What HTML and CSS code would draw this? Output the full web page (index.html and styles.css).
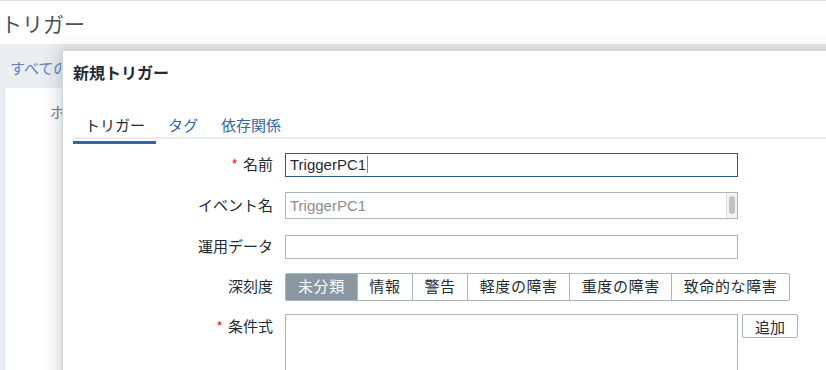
FILE: index.html
```html
<!DOCTYPE html>
<html lang="ja">

<head>
    <meta charset="UTF-8">
    <meta name="viewport" content="width=device-width, initial-scale=1.0">
    <title>トリガー</title>
    <link rel="stylesheet" href="styles.css">
</head>

<body>
    <div class="page-header">
        <h1 class="page-title">トリガー</h1>
    </div>
    <div class="filter-link">すべてのホスト</div>
    <div class="panel">
        <span class="panel-text">ホスト</span>
    </div>

    <div class="modal">
        <div class="modal-head">
            <h4>新規トリガー</h4>
        </div>
        <ul class="tabs">
            <li class="tab active">トリガー</li>
            <li class="tab">タグ</li>
            <li class="tab">依存関係</li>
        </ul>
        <div class="form">
            <div class="row">
                <label class="lbl"><span class="req">*</span>名前</label>
                <div class="field focused">TriggerPC1<span class="caret"></span></div>
            </div>
            <div class="row row-event">
                <label class="lbl">イベント名</label>
                <div class="field readonly">
                    <span class="ph">TriggerPC1</span>
                    <span class="scroll"><span class="thumb"></span></span>
                </div>
            </div>
            <div class="row row-ops">
                <label class="lbl">運用データ</label>
                <div class="field"></div>
            </div>
            <div class="row row-sev">
                <label class="lbl">深刻度</label>
                <div class="segments">
                    <span class="seg selected">未分類</span>
                    <span class="seg">情報</span>
                    <span class="seg">警告</span>
                    <span class="seg">軽度の障害</span>
                    <span class="seg">重度の障害</span>
                    <span class="seg">致命的な障害</span>
                </div>
            </div>
            <div class="row row-top">
                <label class="lbl"><span class="req">*</span>条件式</label>
                <div class="field area"></div>
                <button class="btn">追加</button>
            </div>
        </div>
    </div>
</body>

</html>
```

FILE: styles.css
```css
body {
    margin: 0;
    width: 826px;
    height: 370px;
    overflow: hidden;
    position: relative;
    background: #ebeef0;
    font-family: "Liberation Sans", "Noto Sans CJK JP", sans-serif;
    color: #1f2c33;
}

.page-header {
    height: 43px;
    background: #fff;
    border-top: 1px solid #dcdfe2;
    display: flex;
    align-items: center;
}

.page-title {
    margin: 0;
    padding-left: 1px;
    font-size: 21px;
    font-weight: normal;
    color: #4c5256;
}

/* 被弹窗挡住的部分裁掉 */
.filter-link {
    width: 51px;
    overflow: hidden;
    padding: 15px 0 0 10px;
    height: 20px;
    line-height: 20px;
    font-size: 15px;
    color: #5a84c6;
    white-space: nowrap;
}

.panel {
    margin: 9px 0 0 4px;
    height: 300px;
    background: #fff;
    border-left: 1px solid #dde2e5;
    padding: 15px 0 0 45px;
}

.panel-text {
    display: block;
    width: 12px;
    overflow: hidden;
    white-space: nowrap;
    line-height: 20px;
    font-size: 15px;
    color: #777c80;
}

/* 弹窗 */
.modal {
    position: absolute;
    left: 62px;
    top: 50px;
    width: 820px;
    height: 340px;
    background: #fff;
    border: 1px solid #cfd6db;
    box-shadow: -6px 0 16px rgba(0, 0, 0, 0.12), 0 -3px 6px rgba(0, 0, 0, 0.05);
}

.modal-head {
    padding: 13px 10px 0;
}

.modal-head h4 {
    margin: 0;
    font-size: 16px;
    line-height: 20px;
    font-weight: bold;
    color: #1f2c33;
}

.tabs {
    list-style: none;
    margin: 32px 10px 0;
    padding: 0;
    display: flex;
    border-bottom: 2px solid #ebeef0;
}

.tab {
    position: relative;
    padding: 0 11px 1px 12px;
    line-height: 20px;
    font-size: 15px;
    color: #2f66ab;
}

.tab.active {
    color: #1f2c33;
}

.tab.active::after {
    content: "";
    position: absolute;
    left: 0;
    right: 0;
    bottom: -7px;
    height: 3px;
    background: #3064a8;
}

.form {
    padding: 13px 10px 0;
}

.row {
    display: flex;
    align-items: center;
    margin-bottom: 15px;
}

.row-event {
    margin-bottom: 16px;
}

.row-ops {
    margin-bottom: 14px;
}

.row-sev {
    margin-bottom: 13px;
}

.row-top {
    align-items: flex-start;
}

.lbl {
    width: 200px;
    margin-right: 12px;
    text-align: right;
    font-size: 15px;
    line-height: 24px;
    color: #1f2c33;
}

.req {
    color: #d40000;
    font-size: 13px;
    margin-right: 6px;
    vertical-align: 2px;
}

.field {
    width: 453px;
    height: 24px;
    box-sizing: border-box;
    border: 1px solid #a9b4bb;
    padding: 0 4px;
    font-size: 15px;
    line-height: 22px;
    display: flex;
    align-items: center;
}

.field.focused {
    border-color: #2c5793;
}

.caret {
    display: inline-block;
    width: 1px;
    height: 17px;
    margin-left: 1px;
    background: #888;
}

.field.readonly {
    height: 27px;
    padding-right: 0;
    justify-content: space-between;
    align-items: stretch;
}

.ph {
    color: #8c8c8c;
    line-height: 25px;
}

.scroll {
    width: 10px;
    background: #f3f3f3;
    border-left: 1px solid #e2e2e2;
    display: flex;
    justify-content: center;
    padding-top: 3px;
}

.thumb {
    width: 6px;
    height: 18px;
    border-radius: 3px;
    background: #c1c1c1;
}

.segments {
    display: flex;
    border: 1px solid #a9b4bb;
    border-radius: 2px;
}

.seg {
    padding: 0 11.5px;
    letter-spacing: 0.6px;
    line-height: 26px;
    font-size: 15px;
    color: #1f2c33;
    border-left: 1px solid #a9b4bb;
}

.seg:first-child {
    border-left: none;
    padding: 0 12px;
}

.seg.selected {
    background: #8897a2;
    color: #fff;
}

.field.area {
    height: 80px;
}

.btn {
    margin-left: 4px;
    width: 56px;
    height: 24px;
    padding: 0;
    background: #fff;
    border: 1px solid #a9b4bb;
    border-radius: 2px;
    font-family: inherit;
    font-size: 15px;
    color: #1f2c33;
}
```
